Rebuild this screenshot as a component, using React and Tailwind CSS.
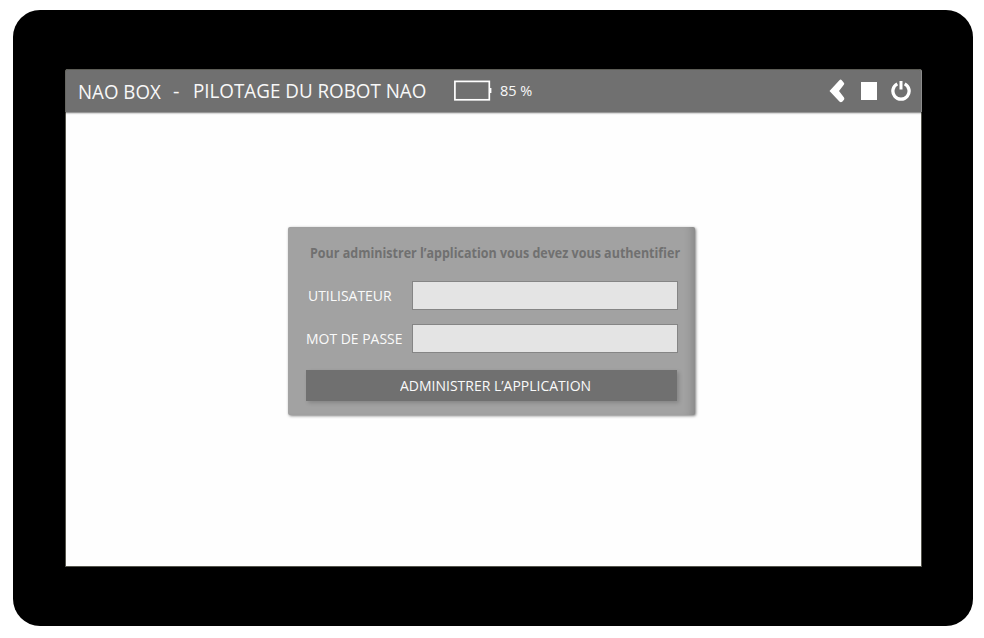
function FlatText({ as: Tag = "span", className = "", children }) {
  return <Tag className={"block origin-left whitespace-nowrap " + className}>{children}</Tag>;
}

function Header() {
  return (
    <header className="-mx-px flex h-[43px] items-center rounded-t-[3px] border border-b-0 border-t-[#5c5c55] border-r-[#8c8c8c] border-l-[#666661] bg-[#707070] pl-[12px] text-[#f8f8f8] shadow-[0_1px_2px_rgba(0,0,0,0.55)]">
      <div className="w-[95px] pt-[2px]">
        <FlatText className="scale-x-[0.935] text-[20px]">NAO BOX</FlatText>
      </div>
      <div className="w-[20px]">
        <FlatText className="text-[20px]">-</FlatText>
      </div>
      <h1 className="w-[261px]">
        <FlatText className="scale-x-[0.94] text-[20px]">PILOTAGE DU ROBOT NAO</FlatText>
      </h1>
      <svg className="h-[22px] w-[39px]" viewBox="0 0 39 22" fill="none">
        <rect x="0.9" y="1.4" width="34.4" height="18.4" stroke="#fff" strokeWidth="1.7" />
        <path d="M36.4 8v5" stroke="#fff" strokeWidth="2" />
      </svg>
      <div className="ml-[7px] pb-px">
        <FlatText className="text-[14.5px]">85 %</FlatText>
      </div>
      <nav className="ml-auto flex items-center pr-[10px]">
        <button className="mr-[15px]" aria-label="Retour">
          <svg className="h-[24px] w-[17px]" viewBox="0 0 17 24" fill="#fff">
            <path d="M0.5 12L10.4 1.2Q11.6 0 12.8 1.2L15 4Q15.5 4.8 15 5.6L10 12L15 18.4Q15.7 19.6 15 20.8L13.2 22.7Q11.8 23.7 10.4 22.5Z" />
          </svg>
        </button>
        <button className="mr-[14px] mb-px h-[18px] w-[16px] bg-white" aria-label="Arrêter" />
        <button aria-label="Éteindre">
          <svg className="h-[22px] w-[20px]" viewBox="0 0 20 22" fill="none" stroke="#fff">
            <path d="M6.3 3.9a8.1 8.1 0 1 0 7.4 0" strokeWidth="3.3" />
            <path d="M10 1v8.5" strokeWidth="3" />
          </svg>
        </button>
      </nav>
    </header>
  );
}

function Field({ label, type, className }) {
  return (
    <label className="flex h-[29px] items-center justify-between">
      <div className={className}>
        <FlatText className="scale-x-[0.93] text-[15px] text-[#fafafa]">{label}</FlatText>
      </div>
      <input type={type} className="h-[29px] w-[266px] border border-[#858585] bg-[#e4e4e4] outline-none" />
    </label>
  );
}

function LoginCard() {
  return (
    <form className="mt-[115px] ml-[222px] h-[188px] w-[407px] rounded-[2px] bg-[#a2a2a2] pr-[17px] pl-[18px] shadow-[inset_-9px_0_10px_-7px_rgba(0,0,0,0.2),1px_1px_3px_rgba(0,0,0,0.5)]">
      <div className="h-[54px] pt-[16px] pl-[4px]">
        <FlatText as="p" className="w-max scale-x-[0.893] text-[14px] leading-[20px] font-bold text-[#707070]">Pour administrer l’application vous devez vous authentifier</FlatText>
      </div>
      <div className="flex flex-col gap-[14px]">
        <Field label="UTILISATEUR" type="text" className="w-[104px] pl-[2px]" />
        <Field label="MOT DE PASSE" type="password" className="w-[106px]" />
      </div>
      <button type="button" className="mt-[17px] flex h-[31px] w-[371px] items-center bg-[#707070] pl-[94px] text-[#fafafa] shadow-[2px_2px_4px_rgba(0,0,0,0.18)]">
        <FlatText className="scale-x-[0.932] text-[15px]">ADMINISTRER L’APPLICATION</FlatText>
      </button>
    </form>
  );
}

export default function App() {
  return (
    <div className="h-[638px] w-[984px] overflow-hidden bg-white pt-[10px] pl-[13px] font-['Open_Sans','Noto_Sans',sans-serif]">
      <div className="h-[616px] w-[960px] rounded-[27px] bg-black pt-[59px] pl-[52px]">
        <main className="h-[498px] w-[857px] rounded-t-[3px] border border-t-0 border-[#55554c] bg-[#fefefe]">
          <Header />
          <LoginCard />
        </main>
      </div>
    </div>
  );
}
